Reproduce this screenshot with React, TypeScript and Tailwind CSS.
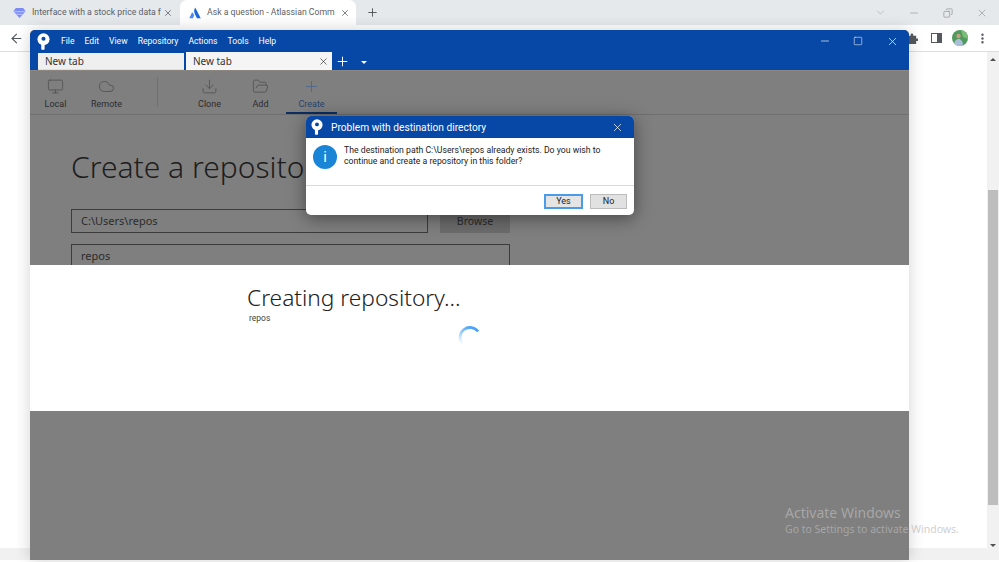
import { ArrowLeft, ChevronDown, Cloud, Copy, Download, FolderOpen, Minus, Monitor, MoreVertical, Plus, Square, X } from 'lucide-react';

const menuItems = ['File', 'Edit', 'View', 'Repository', 'Actions', 'Tools', 'Help'];

function TreeLogo({ className }: { className: string }) {
  return (
    <svg viewBox="0 0 14 18" className={className}>
      <circle cx="7" cy="6.5" r="6.5" fill="#fff" />
      <circle cx="7" cy="6" r="2.2" fill="#0747a6" />
      <rect x="4.6" y="10" width="3.6" height="8" rx="0.8" fill="#fff" />
    </svg>
  );
}

function ToolButton({ label, icon, active }: { label: string; icon: React.ReactNode; active?: boolean }) {
  return (
    <div className={`flex h-full w-[51px] flex-col items-center justify-end border-b-2 pb-[2px] ${active ? 'border-[#0b2e63] text-[#27456f]' : 'border-transparent text-[#2c2c2c]'}`}>
      <div className={active ? 'mb-[3px] text-[#3f5f8f]' : 'mb-[3px] text-[#4a4a4a]'}>{icon}</div>
      <span className="text-[9px] leading-[12px]">{label}</span>
    </div>
  );
}

function BrowserTabs() {
  return (
    <div className="flex h-[25px] items-center bg-[#e6e9ec] pl-[8px] text-[8.7px] text-[#5a5f66]">
      <div className="flex h-full w-[172px] items-center gap-[6px] pl-[5px]">
        <svg viewBox="0 0 14 12" className="h-[12px] w-[13px] shrink-0">
          <path d="M3 0.5h8l2.6 3.6L7 11.5 0.4 4.1z" fill="#7c8cf0" />
          <path d="M1 4.6h12M3.6 7.4h6.8" stroke="#c9d0fb" strokeWidth="0.9" />
        </svg>
        <span className="mt-[1px] w-[125px] whitespace-nowrap">Interface with a stock price data f</span>
        <X size={10} strokeWidth={1.8} className="shrink-0 text-[#55595f]" />
      </div>
      <div className="flex h-full w-[176px] items-center gap-[6px] rounded-t-[7px] bg-white pl-[9px]">
        <svg viewBox="0 0 12 12" className="h-[12px] w-[12px] shrink-0">
          <path d="M6.2 0.6c-1.4 2.3-1.3 4.5-.2 6.7l2 3.9h3.7z" fill="#1868db" />
          <path d="M3.4 5.6c-.2-.3-.5-.2-.6.1L.3 11.2h3.6l1.3-2.9c-.4-1-1-1.9-1.8-2.7z" fill="#4c8cf0" />
        </svg>
        <span className="mt-[1px] w-[127px] whitespace-nowrap">Ask a question - Atlassian Comm</span>
        <X size={10} strokeWidth={1.8} className="shrink-0 text-[#55595f]" />
      </div>
      <Plus size={13} strokeWidth={1.6} className="ml-[10px] text-[#44484d]" />
      <div className="flex-1" />
      <ChevronDown size={13} strokeWidth={1.2} className="mr-[21px] text-[#a3a7ac]" />
      <Minus size={12} strokeWidth={1.2} className="mr-[23px] text-[#8d9196]" />
      <Copy size={10} strokeWidth={1.4} className="mr-[23px] -scale-x-100 text-[#7f8388]" />
      <X size={12} strokeWidth={1.1} className="mr-[11px] text-[#7f8388]" />
    </div>
  );
}

function BrowserToolbar() {
  return (
    <div className="flex h-[27px] items-center border-b border-[#dcdfe2] bg-white pl-[9px] pr-[10px]">
      <ArrowLeft size={15} strokeWidth={1.8} className="text-[#55595e]" />
      <div className="flex-1" />
      <svg viewBox="0 0 12 12" className="mr-[13px] h-[11px] w-[11px]">
        <path d="M1 3h3V2a1.4 1.4 0 0 1 2.8 0v1H10v3h1a1.4 1.4 0 0 1 0 2.8h-1V12H1z" fill="#55595e" />
      </svg>
      <div className="mr-[10px] flex h-[10px] w-[11px] justify-end border-[1.5px] border-[#55595e]">
        <div className="h-full w-[4px] bg-[#55595e]" />
      </div>
      <svg viewBox="0 0 16 16" className="mr-[8px] h-[16px] w-[16px] rounded-full">
        <rect width="16" height="16" fill="#4f9a5c" />
        <path d="M9 0h7v9l-5-2z" fill="#7dbb78" />
        <circle cx="6.5" cy="6" r="2.2" fill="#c99d85" />
        <path d="M2 16c0-5 2-7 4.5-7S11 11 11 16z" fill="#a9bfd8" />
      </svg>
      <MoreVertical size={13} strokeWidth={2.4} className="text-[#55595e]" />
    </div>
  );
}

function Scrollbars() {
  return (
    <>
      <div className="absolute left-[987px] top-[52px] flex h-[508px] w-[12px] flex-col items-center bg-[#f1f1f1]">
        <div className="mt-[6px] h-0 w-0 border-x-[3px] border-b-[3px] border-x-transparent border-b-[#505050]" />
        <div className="mt-[129px] h-[315px] w-[10px] bg-[#bdbdbd]" />
        <div className="mt-[39px] h-0 w-0 border-x-[3px] border-t-[3px] border-x-transparent border-t-[#505050]" />
      </div>
      <div className="absolute left-0 top-[548px] h-[12px] w-[987px] bg-[#f1f1f1]" />
    </>
  );
}

function AppWindow() {
  return (
    <div className="absolute left-[30px] top-[30px] flex h-[530px] w-[879px] flex-col overflow-hidden rounded-t-[5px] bg-[#7f7f7f] shadow-[0_0_16px_rgba(0,0,0,0.18)]">
      <div className="flex h-[22px] shrink-0 items-center bg-[#0747a6] pl-[7px] text-white">
        <TreeLogo className="h-[17px] w-[13px]" />
        <div className="ml-[11px] flex gap-[10px] text-[8.6px]">
          {menuItems.map(m => <span key={m}>{m}</span>)}
        </div>
        <div className="flex-1" />
        <Minus size={12} strokeWidth={1.3} className="mr-[22px]" />
        <Square size={10} strokeWidth={1.3} className="mr-[23px]" />
        <X size={13} strokeWidth={1.3} className="mr-[10px]" />
      </div>

      <div className="flex h-[18px] shrink-0 items-end bg-[#0747a6] pl-[8px]">
        <div className="flex h-[17px] w-[146px] items-center border-b border-[#ddd] bg-[#efefef] pl-[7px] font-['Noto_Sans',sans-serif] text-[10px] text-[#333]">New tab</div>
        <div className="ml-[2px] flex h-[18px] w-[146px] items-center justify-between bg-[#f5f5f5] pl-[7px] pr-[3px] font-['Noto_Sans',sans-serif] text-[10px] text-[#333]">
          New tab
          <X size={11} strokeWidth={1.5} className="text-[#333]" />
        </div>
        <Plus size={15} strokeWidth={1.6} className="mb-[1px] ml-[3px] text-white" />
        <div className="mb-[6px] ml-[11px] h-0 w-0 border-x-[3px] border-t-[3px] border-x-transparent border-t-white" />
      </div>

      <div className="flex h-[45px] shrink-0 border-y border-y-[#6f6f6f] border-t-[#8d8680]">
        <ToolButton label="Local" icon={<Monitor size={17} strokeWidth={1} />} />
        <ToolButton label="Remote" icon={<Cloud size={17} strokeWidth={1} />} />
        <div className="ml-[25px] mr-[26px] mt-[6px] h-[30px] w-px bg-[#6f6f6f]" />
        <ToolButton label="Clone" icon={<Download size={17} strokeWidth={1} />} />
        <ToolButton label="Add" icon={<FolderOpen size={17} strokeWidth={1} />} />
        <ToolButton label="Create" active icon={<Plus size={17} strokeWidth={1} />} />
      </div>

      <div className="h-[150px] shrink-0 overflow-hidden pl-[41px] font-['Noto_Sans',sans-serif]">
        <h1 className="mt-[29px] whitespace-nowrap text-[30px] font-light leading-[46px] text-[#1d1d1d]">Create a repository</h1>
        <div className="mt-[19px] flex items-center gap-[12px]">
          <div className="flex h-[24px] w-[357px] items-center border border-[#3c3c3c] pl-[9px] text-[11px] text-[#2b2b2b]">C:\Users\repos</div>
          <div className="flex h-[24px] w-[70px] items-center justify-center bg-[#6c6c6c] pt-[1px] text-[10.5px] text-[#2b2b2b]">Browse</div>
        </div>
        <div className="mt-[11px] flex h-[24px] w-[439px] items-center border border-[#3c3c3c] pl-[9px] text-[11px] text-[#2b2b2b]">repos</div>
      </div>

      <div className="relative h-[146px] shrink-0 bg-white pl-[217px]">
        <h2 className="mt-[18px] font-['Noto_Sans',sans-serif] text-[22.7px] font-light leading-[30px] text-[#222]">Creating repository...</h2>
        <p className="ml-[2px] text-[8.5px] leading-[10px] text-[#444]">repos</p>
        <svg viewBox="0 0 26 26" className="absolute left-[427px] top-[59px] h-[26px] w-[26px]">
          <defs>
            <linearGradient id="spin" x1="0" y1="1" x2="0.6" y2="0">
              <stop offset="0" stopColor="#fff" />
              <stop offset="1" stopColor="#4aa3f8" />
            </linearGradient>
          </defs>
          <path d="M21 7.5A10 10 0 0 0 5 19.5" fill="none" stroke="url(#spin)" strokeWidth="2.8" />
        </svg>
      </div>
    </div>
  );
}

function ConfirmDialog() {
  return (
    <div className="absolute left-[306px] top-[116px] flex h-[99px] w-[328px] flex-col overflow-hidden rounded-[5px] bg-white shadow-[0_3px_18px_rgba(0,0,0,0.45)]">
      <div className="flex h-[22px] shrink-0 items-center bg-[#0747a6] pl-[5px] text-white">
        <TreeLogo className="h-[16px] w-[12px]" />
        <span className="ml-[8px] mt-[1px] text-[10.2px]">Problem with destination directory</span>
        <div className="flex-1" />
        <X size={13} strokeWidth={1.3} className="mr-[10px]" />
      </div>
      <div className="flex h-[48px] shrink-0 border-b border-[#d9d9d9] pl-[7px] pt-[7px]">
        <div className="flex h-[24px] w-[24px] shrink-0 items-center justify-center rounded-full bg-[#1a85d6] text-[15px] leading-none text-white">i</div>
        <p className="ml-[7px] w-[262px] text-[8.7px] leading-[11px] text-[#1b1b1b]">
          The destination path C:\Users\repos already exists. Do you wish to continue and create a repository in this folder?
        </p>
      </div>
      <div className="flex flex-1 justify-end gap-[7px] pr-[7px] pt-[8px]">
        <div className="flex h-[15px] w-[39px] items-center justify-center border-2 border-[#4a9be8] bg-[#e4e4e4] text-[9px] text-[#222]">Yes</div>
        <div className="flex h-[15px] w-[37px] items-center justify-center border border-[#bcbcbc] bg-[#e1e1e1] text-[9px] text-[#222]">No</div>
      </div>
    </div>
  );
}

export default function App() {
  return (
    <div className="relative h-[562px] w-[999px] overflow-hidden bg-white font-['Roboto',sans-serif]">
      <BrowserTabs />
      <BrowserToolbar />
      <Scrollbars />
      <AppWindow />
      <ConfirmDialog />
      <div className="pointer-events-none absolute left-[785px] top-[503px] font-['Noto_Sans',sans-serif] text-[rgba(185,185,185,0.7)]">
        <p className="text-[14px] leading-[19px]">Activate Windows</p>
        <p className="whitespace-nowrap text-[10.5px] leading-[15px]">Go to Settings to activate Windows.</p>
      </div>
    </div>
  );
}
